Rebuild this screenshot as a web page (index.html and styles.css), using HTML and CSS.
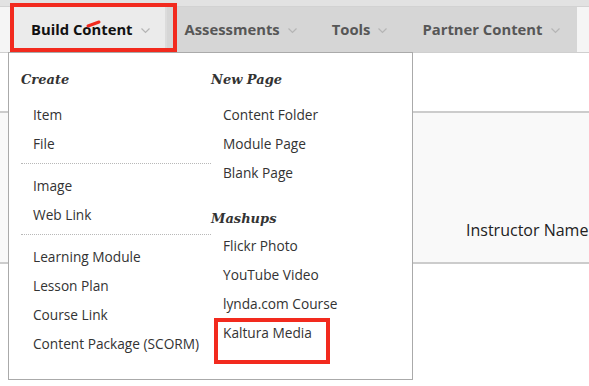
FILE: index.html
```html
<!DOCTYPE html>
<html>
<head>
<meta charset="utf-8">
<link rel="stylesheet" href="styles.css">
</head>
<body>
<div class="page">
  <div class="strip"></div>
  <div class="navrow">
    <div class="navlead"></div>
    <nav class="tabs">
      <div class="tab active">Build Content<svg class="chev" width="9" height="6" viewBox="0 0 9 6"><polyline points="0.5,0.5 4.5,4.5 8.5,0.5" fill="none" stroke="#b5b5b5" stroke-width="1.2"/></svg></div>
      <div class="tab">Assessments<svg class="chev" width="9" height="6" viewBox="0 0 9 6"><polyline points="0.5,0.5 4.5,4.5 8.5,0.5" fill="none" stroke="#b5b5b5" stroke-width="1.2"/></svg></div>
      <div class="tab">Tools<svg class="chev" width="9" height="6" viewBox="0 0 9 6"><polyline points="0.5,0.5 4.5,4.5 8.5,0.5" fill="none" stroke="#b5b5b5" stroke-width="1.2"/></svg></div>
      <div class="tab">Partner Content<svg class="chev" width="9" height="6" viewBox="0 0 9 6"><polyline points="0.5,0.5 4.5,4.5 8.5,0.5" fill="none" stroke="#b5b5b5" stroke-width="1.2"/></svg></div>
    </nav>
    <div class="navtail"></div>
  </div>
  <div class="content">
    <div class="gap-top"></div>
    <div class="panel">
      <div class="instructor">Instructor Name</div>
    </div>
  </div>

  <div class="dropdown">
    <div class="col col-a">
      <div class="head">Create</div>
      <div class="item">Item</div>
      <div class="item">File</div>
      <div class="sep"></div>
      <div class="item">Image</div>
      <div class="item">Web Link</div>
      <div class="sep"></div>
      <div class="item">Learning Module</div>
      <div class="item">Lesson Plan</div>
      <div class="item">Course Link</div>
      <div class="item">Content Package (SCORM)</div>
    </div>
    <div class="col col-b">
      <div class="head">New Page</div>
      <div class="item">Content Folder</div>
      <div class="item">Module Page</div>
      <div class="item">Blank Page</div>
      <div class="head head-2">Mashups</div>
      <div class="item">Flickr Photo</div>
      <div class="item">YouTube Video</div>
      <div class="item">lynda.com Course</div>
      <div class="item">Kaltura Media</div>
    </div>
  </div>

  <div class="mark mark-tab"></div>
  <div class="mark mark-kaltura"></div>
  <svg class="scribble" width="16" height="8" viewBox="0 0 16 8"><path d="M2,6 L13,2" stroke="#f22a1e" stroke-width="3" stroke-linecap="round" fill="none"/></svg>
</div>
</body>
</html>
```

FILE: styles.css
```css
html, body {
  margin: 0;
  padding: 0;
  background: #ffffff;
  overflow: hidden;
}
body {
  font-family: "Open Sans", "Liberation Sans", sans-serif;
  color: #333;
}
.page {
  position: relative;
  width: 589px;
  height: 386px;
  overflow: hidden;
}
.strip {
  height: 6px;
  background: #e2e2e2;
  border-bottom: 1px solid #d2d2d2;
}
.navrow {
  display: flex;
  height: 45px;
  background: #f5f5f5;
  border-bottom: 1px solid #cfcfcf;
}
.navlead {
  width: 14px;
  flex: none;
}
.tabs {
  display: flex;
  background: #d6d6d6;
  flex: none;
}
.tab {
  display: flex;
  align-items: center;
  padding: 0 17px 2px 18px;
  font-weight: 700;
  font-size: 14.8px;
  color: #575757;
  white-space: nowrap;
}
.tab.active {
  background: #ebebeb;
  color: #111;
  border-right: 2px solid #dcdcdc;
  padding-left: 17px;
  padding-right: 15px;
}
.chev {
  margin-left: 8px;
  margin-top: 4px;
}
.navtail {
  flex: 1;
}
.content {
  display: flex;
  flex-direction: column;
}
.gap-top {
  height: 58px;
}
.panel {
  height: 149px;
  background: #f9f9f9;
  border-top: 2px solid #cccccc;
  border-bottom: 2px solid #cccccc;
  display: flex;
  align-items: flex-end;
}
.instructor {
  padding-left: 466px;
  padding-bottom: 21px;
  font-size: 16px;
  color: #222;
  white-space: nowrap;
}
.dropdown {
  position: absolute;
  left: 8px;
  top: 52px;
  height: 326px;
  background: #fff;
  border: 1px solid #aaaaaa;
  display: flex;
  padding-left: 12px;
  box-sizing: content-box;
  width: 391px;
}
.col {
  display: flex;
  flex-direction: column;
  padding-top: 15px;
}
.col-a {
  width: 190px;
}
.head {
  font-family: "DejaVu Serif", "Liberation Serif", serif;
  font-style: italic;
  font-weight: 700;
  font-size: 13px;
  line-height: 24px;
  color: #333;
  margin-bottom: 8px;
}
.head-2 {
  margin-top: 20px;
  margin-bottom: 0;
}
.item {
  font-size: 13.7px;
  line-height: 29px;
  padding-left: 12px;
  color: #333;
  white-space: nowrap;
}
.sep {
  border-top: 1px dotted #b8b8b8;
  margin: 5px 0 7px;
}
.mark {
  position: absolute;
  border: 4px solid #f22a1e;
  box-sizing: border-box;
}
.mark-tab {
  left: 10px;
  top: 3px;
  width: 167px;
  height: 49px;
}
.mark-kaltura {
  left: 214px;
  top: 318px;
  width: 116px;
  height: 46px;
}
.scribble {
  position: absolute;
  left: 86px;
  top: 20px;
}
```
